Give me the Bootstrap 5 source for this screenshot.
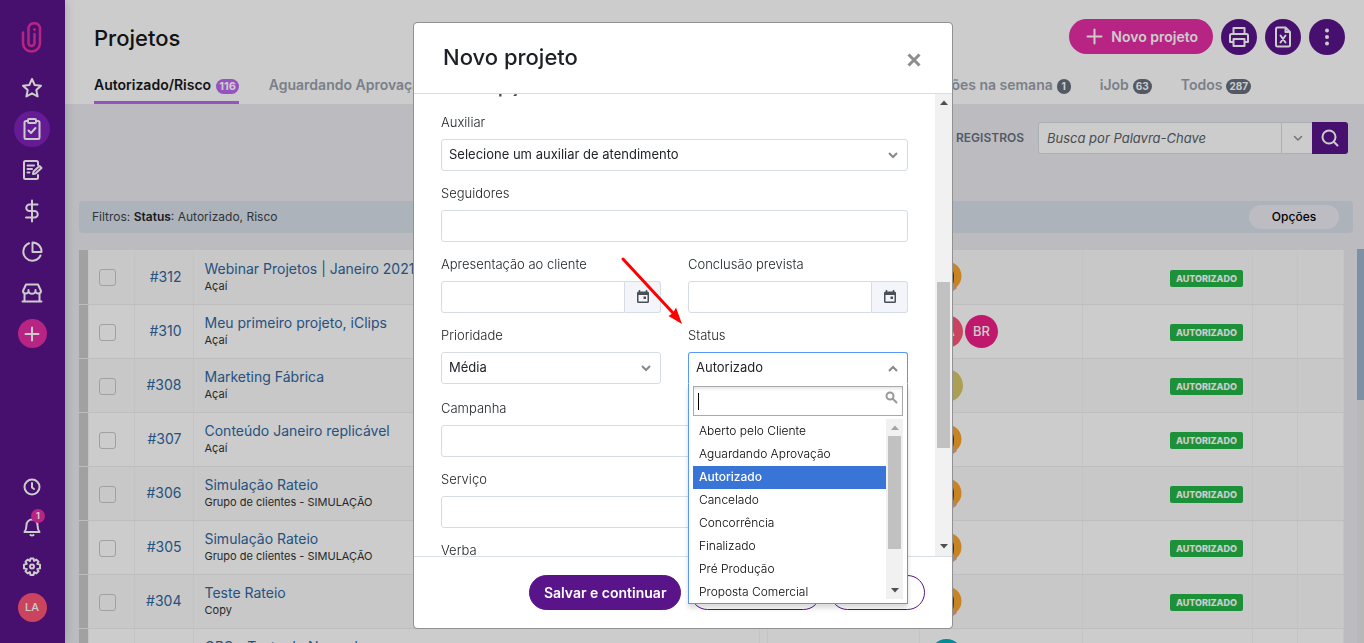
<!DOCTYPE html>
<html lang="pt-BR">
<head>
<meta charset="utf-8">
<meta name="viewport" content="width=device-width, initial-scale=1">
<title>Projetos</title>
<link href="https://cdn.jsdelivr.net/npm/bootstrap@5.3.0/dist/css/bootstrap.min.css" rel="stylesheet">
<style>
:root{--roxo:#5a148a;--rosa:#e72ea6;--linha:#d5dce4}
body{font-family:Inter,"Open Sans",sans-serif;font-size:13px;line-height:20px;color:#212529;background:#ebecf1}
svg{display:block;flex:none}
.ico{fill:none;stroke:currentColor;stroke-width:2;stroke-linecap:round;stroke-linejoin:round}
.disc{display:flex;align-items:center;justify-content:center;border-radius:50%;flex:none;padding:0;border:0;color:#fff}

.side{width:65px;background:var(--roxo);box-shadow:0 0 10px rgba(0,0,0,.2);padding:0 1px 16px 0;z-index:2}
.side-logo{height:67px;padding-top:7px;color:var(--rosa)}
.side-item{height:41px;color:#fff}
.side-foot .side-item{height:40px}
.disc-36{width:36px;height:36px}
.disc-33{width:33px;height:33px;font-weight:500;font-size:13px}
.disc-29{width:29px;height:29px;font-size:11px}
.disc-rosa{background:var(--rosa)}
.side-on{background:#7d22b8}
.bell-count{position:absolute;top:-8px;right:-4px;width:14px;height:14px;font-size:9px;font-weight:700;background:var(--rosa)}

.top{height:104px;padding:19px 19px 0 29px}
.top h1{font-size:22px;font-weight:500;line-height:38px;margin:0;color:#16181b}
.btn-pink{background:var(--rosa);color:#fff;border-radius:18px;height:35px;padding:0 15px 0 17px;font-size:14px;font-weight:600;border:0}
.bg-roxo{background:var(--roxo)}
.tabs{margin-top:16px;gap:30px;font-size:14px;font-weight:600}
.tabs a{color:#9a9fac;text-decoration:none;height:31px;white-space:nowrap;display:flex;gap:5px;padding-top:2px}
.tabs a.on{color:#16181b;border-bottom:3px solid #bc68ef;border-radius:2px 2px 0 0}
.tabs-end{gap:29px;padding-right:94px}
.tabs-end a{gap:4px}
.pill{background:#67707f;color:#fff;font-size:10px;font-weight:700;line-height:15px;height:15px;border-radius:8px;padding:0 3px;min-width:14px;text-align:center;margin-top:4px}
.on .pill{background:#bc68ef;font-size:11px}

.tools{padding:18px 16px 0 0;gap:14px}
.tools strong{font-size:12px;font-weight:600;color:#67707f}
.busca{width:310px;height:32px;background:#fff;border:1px solid var(--linha);border-radius:3px}
.busca input{min-width:0;border:0;background:none;padding:0 8px;font-style:italic;font-size:13px;outline:0}
.busca input::placeholder{color:#5a6068;opacity:1}
.busca .caret{width:32px;border:0;border-left:1px solid var(--linha);background:none;color:#8b919b}
.busca .go{width:36px;border:0;border-radius:0 3px 3px 0;margin:-1px;color:#fff}
.filtros{margin:47px 11px 0 14px;height:32px;flex:none;border-radius:4px;background:#d7e0e9;padding:0 14px 0 13px;font-size:12px;color:#3d4248}
.opcoes{background:#ebecf3;border:0;border-radius:12px;width:90px;height:24px;font-size:12px;font-weight:500}

.grade{padding:17px 0 0 14px}
.proj{table-layout:fixed;margin:0;width:100%}
.proj td{height:54px;padding:0;border:0;border-bottom:1px solid #eee;border-right:1px solid #f5f5f5;vertical-align:middle;background:#fff;white-space:nowrap}
.proj tr:nth-child(odd) td{background:#fafafa}
.proj tr td:first-child,.proj tr:nth-child(odd) td:first-child{background:#cacaca;border-bottom-color:#ededed}
.proj a{color:#2f679f;text-decoration:none}
.proj .num{text-align:right;padding-right:11px;font-size:14px}
.proj .nome{padding-left:11px;overflow:hidden}
.proj .nome a{display:block;font-size:14px;line-height:18px}
.proj .nome span{display:block;font-size:11px;line-height:16px;color:#333}
.proj .gente{padding-left:10px}
.proj .st{text-align:right;padding-right:9px}
.selo{display:inline-block;background:#25b648;color:#fff;font-size:9px;font-weight:800;line-height:17px;border-radius:2px;padding:0 6px;margin-top:3px}
.proj input{display:block;appearance:none;width:17px;height:17px;border:1px solid #c9c9c9;border-radius:3px;margin:2px auto 0 10px;background:none}
.duplas{gap:2px}
.av-l{background:#fe5577}.av-b{background:#f01f88}.av-o{background:#d6c76a}.av-t{background:#00b0c0}
.barra{width:7px;margin:-1px 0 0 13px;background:#e7e7e7}
.barra div{height:151px;background:#9db5cd}

.modal-backdrop.show{opacity:.2}
.modal.show{padding-left:2px;overflow:hidden}
.modal-dialog{max-width:540px;height:calc(100vh - 36px);margin:22px auto 14px}
.modal-content{height:100%;border:1px solid #919191;border-radius:4px}
.modal-header{padding:0 31px 2px 29px;height:71px;border-bottom:1px solid #dadfe5;flex:none}
.modal-header h2{font-size:22px;font-weight:500;line-height:30px;margin:0;color:#1d2125}
.fechar{border:0;background:none;padding:0;color:#8d8d8d;margin-top:6px}
.corpo{min-height:0;overflow:hidden}
.campos{padding:0 27px;min-width:0;overflow:hidden}
.campos h3{font-size:18px;font-weight:600;line-height:24px;margin:-19px 0 13px;color:#444a52}
.duo{display:grid;grid-template-columns:1fr 1fr;column-gap:27px}
.campo{margin-bottom:12px}
.com-lista{margin-bottom:14px}
.campo label{display:block;margin-bottom:7px;line-height:20px;font-size:13px;font-weight:300;color:#212529}
.caixa{display:block;width:100%;height:32px;border:1px solid var(--linha);border-radius:3px;background:#fff;padding:0 7px;font-size:13px;color:#212529;outline:0}
select.caixa{appearance:none;padding-bottom:2px;background:#fff url("data:image/svg+xml,%3Csvg xmlns='http://www.w3.org/2000/svg' width='10' height='7'%3E%3Cpath d='M1 1l4 4 4-4' fill='none' stroke='%23888' stroke-width='2'/%3E%3C/svg%3E") no-repeat right 9px top 12px}
select.caixa.aberto{border-color:#5897fb;border-bottom-color:#fff;border-radius:3px 3px 0 0;background-image:url("data:image/svg+xml,%3Csvg xmlns='http://www.w3.org/2000/svg' width='10' height='7'%3E%3Cpath d='M1 6l4-4 4 4' fill='none' stroke='%23888' stroke-width='2'/%3E%3C/svg%3E")}
.data .caixa{border-radius:3px 0 0 3px;min-width:0}
.data button{flex:none;width:36px;border:1px solid var(--linha);border-left:0;border-radius:0 3px 3px 0;background:#f4f5fa;padding:0;display:flex;align-items:center;justify-content:center}
.trilho{width:17px;flex:none;background:#f1f1f1;color:#4f4f4f;display:flex;flex-direction:column;align-items:center;padding:6px 0 7px}
.trilho div{width:13px;background:#c1c1c1}
.trilho-corpo div{height:166px;margin-top:177px}
.trilho-menu{padding:6px 0}
.trilho-menu div{height:113px;margin-top:6px}
/* opens over the dialog, so it is taken out of the scrolling body */
.menu{position:absolute;z-index:3;width:220px;border:1px solid #5897fb;border-top:0;background:#fff;padding:2px 4px 4px;box-shadow:0 4px 5px rgba(0,0,0,.15)}
.menu-busca{height:30px;border:1px solid #aaa;padding:0 4px;box-shadow:inset 0 3px 4px -2px rgba(0,0,0,.15)}
.menu-busca input{border:0;outline:0;min-width:0;background:none;padding:0;height:28px}
.menu-busca svg{color:#999;margin-top:4px}
.menu-busca .cursor{width:1px;height:17px;background:#000;margin-top:6px}
.menu-lista{height:180px;margin-top:3px;overflow:hidden}
.menu-lista ul{padding-top:1px}
.menu-lista li{height:23px;line-height:22px;padding-left:6px;font-size:12px;font-weight:300;color:#000}
.menu-lista li.sel{background:#3875d7;color:#fff;font-weight:500}
.modal-footer{height:72px;padding:0 27px;border-top:1px solid #dadfe5;flex:none;gap:9px;flex-wrap:nowrap}
.modal-footer button{margin:0;height:35px;border-radius:18px;border:1px solid var(--roxo);background:#fff;color:var(--roxo);font-size:14px;font-weight:600;padding:0 16px;white-space:nowrap}
.modal-footer .forte{background:var(--roxo);color:#fff;padding:0 14px}
.seta{position:absolute;left:206px;top:233px;z-index:4;pointer-events:none}
</style>
</head>
<body class="vh-100 overflow-hidden">
<svg width="0" height="0" class="position-absolute">
  <symbol id="foto" viewBox="0 0 33 33"><circle cx="17" cy="16" r="14.500" fill="#fba62e"/><path d="M10 28c-2-10 0-20 7-21 7 0 7.500 7 6.500 15l-2 8c-4 2-8 0-11-2z" fill="#33221f"/><ellipse cx="16" cy="15" rx="4" ry="6" fill="#d79a77"/><path d="M17 27l6-4 4 5-4 3c-3 1-5 0-6-1z" fill="#e0a486"/></symbol>
  <symbol id="agenda" viewBox="0 0 14 14"><path d="M3.500 0v2M10.500 0v2" stroke="#4a4f57" stroke-width="1.500"/><path fill-rule="evenodd" fill="#4a4f57" d="M2.500 1.500h9q1.500 0 1.500 1.500v8.500q0 1.500-1.500 1.500h-9Q1 13 1 11.500V3Q1 1.500 2.500 1.500zM2.500 5v6.500h9V5z"/><path d="M7.500 6.500h2.500v2.500H7.500z" fill="#4a4f57"/></symbol>
</svg>

<div class="d-flex h-100">
  <nav class="side d-flex flex-column flex-shrink-0">
    <a href="#" class="side-logo d-flex align-items-center justify-content-center"><svg width="22" height="34" viewBox="0 0 22 34" class="ico"><path d="M2 12.500V23a8.500 8.500 0 0 0 17 0V7.500a6 6 0 0 0-11.500 0V23a3 3 0 0 0 6 0V14" stroke-width="2.500"/><circle cx="13.500" cy="9.500" r="1" fill="currentColor" stroke-width="1"/></svg></a>
    <a href="#" class="side-item d-flex align-items-center justify-content-center"><svg width="22" height="22" viewBox="0 0 22 22" class="ico"><path d="M11 2l2.700 6 6.300.7-4.700 4.400 1.300 6.400-5.600-3.200-5.600 3.200 1.300-6.400L2 8.700 8.300 8z"/></svg></a>
    <a href="#" class="side-item d-flex align-items-center justify-content-center"><span class="disc disc-36 side-on"><svg width="18" height="22" viewBox="0 0 18 22" class="ico"><path d="M5 3H3a1.500 1.500 0 0 0-1.500 1.500v15A1.500 1.500 0 0 0 3 21h12a1.500 1.500 0 0 0 1.500-1.500v-15A1.500 1.500 0 0 0 15 3h-2"/><rect x="5" y="1" width="8" height="4" rx="1"/><path d="M5.500 12.500l2.500 2.500 4.500-5"/></svg></span></a>
    <a href="#" class="side-item d-flex align-items-center justify-content-center"><svg width="22" height="22" viewBox="0 0 22 22" class="ico"><path d="M17 6V3.500A1.500 1.500 0 0 0 15.500 2h-11A1.500 1.500 0 0 0 3 3.500v15A1.500 1.500 0 0 0 4.500 20h11a1.500 1.500 0 0 0 1.500-1.500V16M6.500 6.500H13M6.500 10H11M6.500 13.500H8.500"/><path d="M12 15l.5-2.500L18.500 7l2 2-6 5.500z"/></svg></a>
    <a href="#" class="side-item d-flex align-items-center justify-content-center"><svg width="16" height="24" viewBox="0 0 16 24" class="ico"><path d="M8 1.500v21M13.500 5.500H5.500a3.200 3.200 0 0 0 0 6.500h5a3.200 3.200 0 0 1 0 6.500H2"/></svg></a>
    <a href="#" class="side-item d-flex align-items-center justify-content-center"><svg width="22" height="22" viewBox="0 0 22 22" class="ico"><path d="M8 2.300a9 9 0 1 0 11.500 12.200"/><path d="M11.500 1.500V11h9a9 9 0 0 0-9-9.500z"/></svg></a>
    <a href="#" class="side-item d-flex align-items-center justify-content-center"><svg width="22" height="20" viewBox="0 0 22 20" class="ico"><path d="M3.500 11v7.500M18.500 11v7.500M1.500 18.500h19M5 1.500h12l3 6.500c0 3-4.500 3.500-5.500.5C13.500 11.500 8.500 11.500 7.500 8.500 6.500 11.500 2 11 2 8zM7.500 8.500V7M14.500 8.500V7"/></svg></a>
    <a href="#" class="side-item d-flex align-items-center justify-content-center"><span class="disc disc-29 disc-rosa"><svg width="16" height="16" viewBox="0 0 16 16" class="ico"><path d="M8 1.500v13M1.500 8h13"/></svg></span></a>
    <div class="side-foot mt-auto">
      <a href="#" class="side-item d-flex align-items-center justify-content-center"><svg width="18" height="18" viewBox="0 0 18 18" class="ico"><circle cx="9" cy="9" r="7.500"/><path d="M9 5v4.500l2 1.500"/></svg></a>
      <a href="#" class="side-item d-flex align-items-center justify-content-center text-decoration-none"><span class="position-relative"><svg width="18" height="20" viewBox="0 0 18 20" class="ico"><path d="M1.500 15h15c-2-2.500-2-4-2-7A5.500 5.500 0 0 0 3.500 8c0 3 0 4.500-2 7zM7.500 18q1.500 1 3 0"/></svg><span class="disc bell-count">1</span></span></a>
      <a href="#" class="side-item d-flex align-items-center justify-content-center"><svg width="20" height="20" viewBox="0 0 20 20" class="ico"><path d="M8.500 1.500h3l.6 2.400 2.300-1.300 2.100 2.100-1.300 2.200 2.800.7v3.800l-2.800.7 1.300 2.200-2.100 2.100-2.300-1.300-.6 2.900h-3l-.6-2.900-2.300 1.300-2.100-2.100 1.300-2.200-2.800-.7V7.600l2.800-.7-1.300-2.200 2.100-2.100 2.300 1.300z"/><circle cx="10" cy="9.500" r="2"/></svg></a>
      <a href="#" class="side-item d-flex align-items-center justify-content-center text-decoration-none"><span class="disc disc-29 av-l fw-medium">LA</span></a>
    </div>
  </nav>

  <main class="flex-grow-1 d-flex flex-column overflow-hidden">
    <header class="top bg-white flex-shrink-0">
      <div class="d-flex justify-content-between align-items-start">
        <h1>Projetos</h1>
        <div class="d-flex gap-2">
          <button class="btn-pink d-flex align-items-center gap-2"><svg width="17" height="17" viewBox="0 0 17 17" class="ico"><path d="M8.500 1.500v14M1.500 8.500h14"/></svg>Novo projeto</button>
          <button class="disc disc-36 bg-roxo" aria-label="Imprimir"><svg width="22" height="22" viewBox="0 0 22 22" class="ico"><path d="M5.500 8V2h11v6M5.500 16H2V9.500A1.500 1.500 0 0 1 3.500 8h15A1.500 1.500 0 0 1 20 9.500V16h-3.500M5.500 13h11v7h-11z"/></svg></button>
          <button class="disc disc-36 bg-roxo" aria-label="Exportar"><svg width="18" height="22" viewBox="0 0 18 22" class="ico"><path d="M11.500 1.500h-8A1.500 1.500 0 0 0 2 3v16a1.500 1.500 0 0 0 1.500 1.500h11A1.500 1.500 0 0 0 16 19V6zM11.500 1.500V6H16M6.500 9.500l5 7M11.500 9.500l-5 7"/></svg></button>
          <button class="disc disc-36 bg-roxo" aria-label="Mais"><svg width="6" height="18" viewBox="0 0 6 18" fill="currentColor"><circle cx="3" cy="2.500" r="2"/><circle cx="3" cy="9" r="2"/><circle cx="3" cy="15.500" r="2"/></svg></button>
        </div>
      </div>
      <nav class="tabs d-flex">
        <a href="#" class="on">Autorizado/Risco <span class="pill">116</span></a>
        <a href="#">Aguardando Aprovação <span class="pill">12</span></a>
        <div class="tabs-end d-flex ms-auto">
          <a href="#">Apresentações na semana <span class="pill">1</span></a>
          <a href="#">iJob <span class="pill">63</span></a>
          <a href="#">Todos <span class="pill">287</span></a>
        </div>
      </nav>
    </header>

    <div class="tools d-flex justify-content-end align-items-center">
      <strong>TODOS OS REGISTROS</strong>
      <form class="busca d-flex">
        <input type="search" class="flex-grow-1" placeholder="Busca por Palavra-Chave" aria-label="Busca por Palavra-Chave">
        <button type="button" class="caret d-flex align-items-center justify-content-center p-0" aria-label="Opções de busca"><svg width="10" height="7" viewBox="0 0 10 7" class="ico"><path d="M1.500 1.500L5 5l3.500-3.500" stroke-width="1.500"/></svg></button>
        <button type="button" class="go bg-roxo d-flex align-items-center justify-content-center p-0" aria-label="Buscar"><svg width="18" height="18" viewBox="0 0 18 18" class="ico"><circle cx="8" cy="8" r="6.500"/><path d="M13 13l3.500 3.500"/></svg></button>
      </form>
    </div>

    <div class="filtros d-flex align-items-center justify-content-between">
      <span>Filtros: <b class="fw-semibold text-dark">Status</b>: Autorizado, Risco</span>
      <button class="opcoes">Opções</button>
    </div>

    <div class="grade d-flex flex-grow-1 overflow-hidden">
      <div class="flex-grow-1">
      <table class="proj">
        <colgroup><col style="width:9px"><col style="width:46px"><col style="width:59px"><col><col style="width:8px"><col style="width:152px"><col style="width:163px"><col style="width:170px"><col style="width:45px"><col style="width:46px"></colgroup>
        <tbody>
        <tr><td></td><td><input type="checkbox" aria-label="#312"></td><td class="num"><a href="#">#312</a></td><td class="nome"><a href="#">Webinar Projetos | Janeiro 2021</a><span>Açaí</span></td><td></td><td></td><td class="gente"><svg width="33" height="33"><use href="#foto"/></svg></td><td class="st"><span class="selo">AUTORIZADO</span></td><td></td><td></td></tr>
        <tr><td></td><td><input type="checkbox" aria-label="#310"></td><td class="num"><a href="#">#310</a></td><td class="nome"><a href="#">Meu primeiro projeto, iClips</a><span>Açaí</span></td><td></td><td></td><td class="gente"><div class="duplas d-flex"><span class="disc disc-33 av-l">LA</span><span class="disc disc-33 av-b">BR</span></div></td><td class="st"><span class="selo">AUTORIZADO</span></td><td></td><td></td></tr>
        <tr><td></td><td><input type="checkbox" aria-label="#308"></td><td class="num"><a href="#">#308</a></td><td class="nome"><a href="#">Marketing Fábrica</a><span>Açaí</span></td><td></td><td></td><td class="gente"><span class="disc disc-33 av-o">M</span></td><td class="st"><span class="selo">AUTORIZADO</span></td><td></td><td></td></tr>
        <tr><td></td><td><input type="checkbox" aria-label="#307"></td><td class="num"><a href="#">#307</a></td><td class="nome"><a href="#">Conteúdo Janeiro replicável</a><span>Açaí</span></td><td></td><td></td><td class="gente"><svg width="33" height="33"><use href="#foto"/></svg></td><td class="st"><span class="selo">AUTORIZADO</span></td><td></td><td></td></tr>
        <tr><td></td><td><input type="checkbox" aria-label="#306"></td><td class="num"><a href="#">#306</a></td><td class="nome"><a href="#">Simulação Rateio</a><span>Grupo de clientes - SIMULAÇÃO</span></td><td></td><td></td><td class="gente"><svg width="33" height="33"><use href="#foto"/></svg></td><td class="st"><span class="selo">AUTORIZADO</span></td><td></td><td></td></tr>
        <tr><td></td><td><input type="checkbox" aria-label="#305"></td><td class="num"><a href="#">#305</a></td><td class="nome"><a href="#">Simulação Rateio</a><span>Grupo de clientes - SIMULAÇÃO</span></td><td></td><td></td><td class="gente"><svg width="33" height="33"><use href="#foto"/></svg></td><td class="st"><span class="selo">AUTORIZADO</span></td><td></td><td></td></tr>
        <tr><td></td><td><input type="checkbox" aria-label="#304"></td><td class="num"><a href="#">#304</a></td><td class="nome"><a href="#">Teste Rateio</a><span>Copy</span></td><td></td><td></td><td class="gente"><svg width="33" height="33"><use href="#foto"/></svg></td><td class="st"><span class="selo">AUTORIZADO</span></td><td></td><td></td></tr>
        <tr><td></td><td><input type="checkbox" aria-label="#303"></td><td class="num"><a href="#">#303</a></td><td class="nome"><a href="#">GPS - Teste de Novembro</a><span>Copy</span></td><td></td><td></td><td class="gente"><span class="disc disc-33 av-t">GP</span></td><td class="st"><span class="selo">AUTORIZADO</span></td><td></td><td></td></tr>
        </tbody>
      </table>
      </div>
      <div class="barra flex-shrink-0"><div></div></div>
    </div>
  </main>
</div>

<div class="modal-backdrop show"></div>
<div class="modal show d-block" tabindex="-1" role="dialog" aria-labelledby="titulo">
  <div class="modal-dialog">
    <div class="modal-content">
      <div class="modal-header d-flex justify-content-between align-items-center">
        <h2 id="titulo">Novo projeto</h2>
        <button class="fechar" aria-label="Fechar"><svg width="14" height="14" viewBox="0 0 14 14" class="ico"><path d="M1.500 1.500l11 11M12.500 1.500l-11 11" stroke-width="3" stroke-linecap="butt"/></svg></button>
      </div>
      <div class="corpo d-flex flex-grow-1">
        <form class="campos flex-grow-1">
          <h3>Mais opções</h3>
          <div class="campo"><label for="aux">Auxiliar</label><select id="aux" class="caixa"><option>Selecione um auxiliar de atendimento</option></select></div>
          <div class="campo"><label for="seg">Seguidores</label><input id="seg" class="caixa"></div>
          <div class="duo">
            <div class="campo"><label for="apr">Apresentação ao cliente</label><div class="data d-flex"><input id="apr" class="caixa"><button type="button" aria-label="Calendário"><svg width="14" height="14"><use href="#agenda"/></svg></button></div></div>
            <div class="campo"><label for="con">Conclusão prevista</label><div class="data d-flex"><input id="con" class="caixa"><button type="button" aria-label="Calendário"><svg width="14" height="14"><use href="#agenda"/></svg></button></div></div>
            <div class="campo com-lista"><label for="pri">Prioridade</label><select id="pri" class="caixa"><option>Média</option></select></div>
            <div class="campo com-lista"><label for="sta">Status</label><select id="sta" class="caixa aberto"><option>Autorizado</option></select>
              <div class="menu">
                <div class="menu-busca d-flex"><span class="cursor"></span><input class="flex-grow-1" aria-label="Filtrar status"><svg width="13" height="13" viewBox="0 0 13 13" class="ico"><circle cx="5" cy="5" r="3.500"/><path d="M8 8l3.500 3.500"/></svg></div>
                <div class="menu-lista d-flex">
                  <ul class="list-unstyled mb-0 flex-grow-1"><li>Aberto pelo Cliente</li><li>Aguardando Aprovação</li><li class="sel">Autorizado</li><li>Cancelado</li><li>Concorrência</li><li>Finalizado</li><li>Pré Produção</li><li>Proposta Comercial</li></ul>
                  <div class="trilho trilho-menu"><svg width="8" height="5"><path d="M0 5l4-4.500L8 5z" fill="#a3a3a3"/></svg><div></div><svg width="8" height="5" class="mt-auto"><path d="M0 0h8L4 4.500z" fill="currentColor"/></svg></div>
                </div>
              </div>
            </div>
          </div>
          <div class="campo"><label for="cam">Campanha</label><input id="cam" class="caixa"></div>
          <div class="campo"><label for="ser">Serviço</label><input id="ser" class="caixa"></div>
          <div class="campo"><label for="ver">Verba</label><input id="ver" class="caixa"></div>
        </form>
        <div class="trilho trilho-corpo"><svg width="8" height="5"><path d="M0 5l4-4.500L8 5z" fill="currentColor"/></svg><div></div><svg width="8" height="5" class="mt-auto"><path d="M0 0h8L4 4.500z" fill="currentColor"/></svg></div>
      </div>
      <div class="modal-footer d-flex align-items-center justify-content-end">
        <button class="forte">Salvar e continuar</button>
        <button>Salvar e voltar</button>
        <button>Cancelar</button>
      </div>
      <svg class="seta" width="64" height="70" viewBox="0 0 64 70"><path d="M3 3l50 54" stroke="#f00" stroke-width="3" stroke-linecap="round"/><path d="M62 68L48.500 60l4.500-3 3-5.500z" fill="#f00"/></svg>
    </div>
  </div>
</div>
<script src="https://cdn.jsdelivr.net/npm/bootstrap@5.3.0/dist/js/bootstrap.bundle.min.js"></script>
</body>
</html>
